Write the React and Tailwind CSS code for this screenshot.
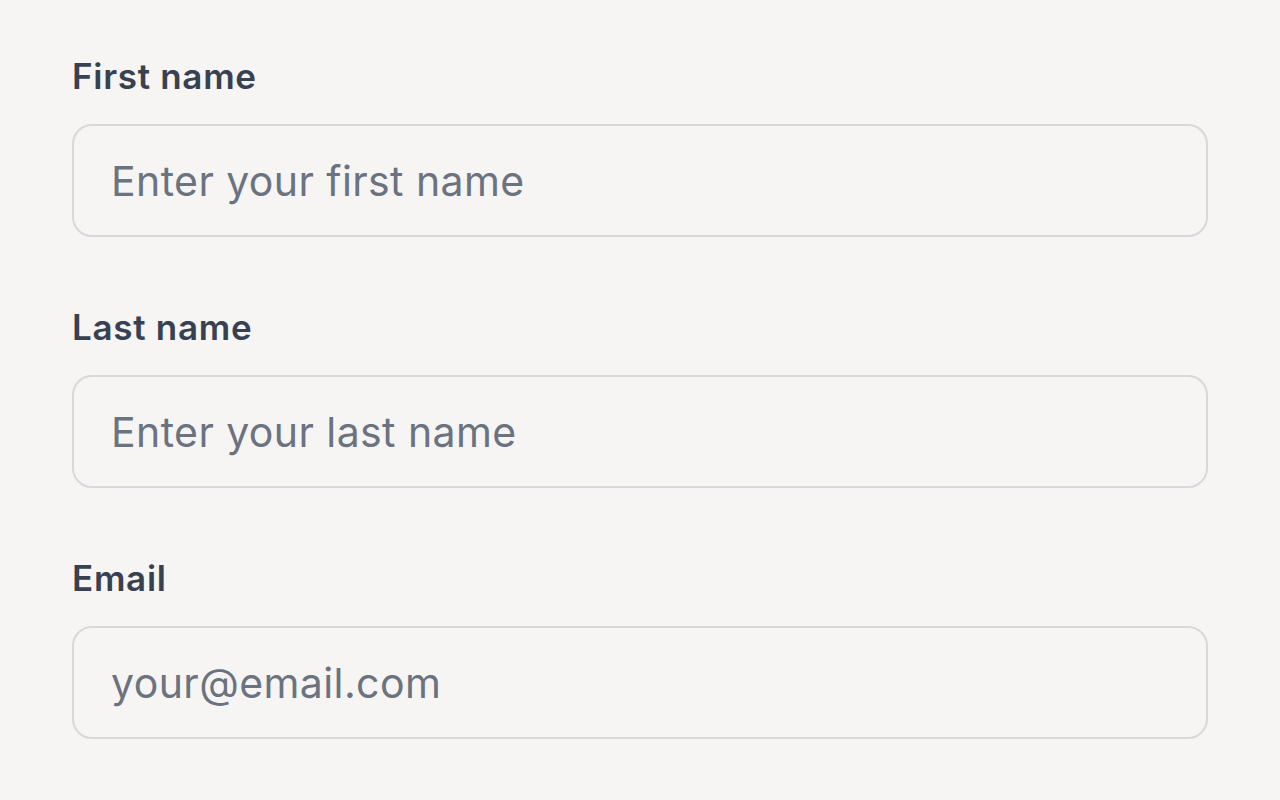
import React from 'react';

const fields = [
    { id: 'first', label: 'First name', type: 'text', placeholder: 'Enter your first name' },
    { id: 'last', label: 'Last name', type: 'text', placeholder: 'Enter your last name' },
    { id: 'email', label: 'Email', type: 'email', placeholder: 'your@email.com' },
];

export default function App() {
    return (
        <div
            className="min-h-screen bg-[#f6f5f3] px-[72px] pt-[51px]"
            style={{ fontFamily: 'Inter, "Noto Sans", sans-serif' }}
        >
            <form className="flex flex-col gap-[65px]">
                {fields.map((f) => (
                    <div key={f.id} className="flex flex-col gap-[23px]">
                        <label
                            htmlFor={f.id}
                            className="block text-[35px] leading-[50px] font-semibold tracking-[0.02em] text-[#374151]"
                        >
                            {f.label}
                        </label>
                        <input
                            id={f.id}
                            type={f.type}
                            placeholder={f.placeholder}
                            className="w-full h-[113px] px-[37px] bg-transparent border-2 border-[#d8d8da] rounded-[20px] text-[41px] tracking-[0.01em] text-[#111827] placeholder:text-[#6b7280] outline-none"
                        />
                    </div>
                ))}
            </form>
        </div>
    );
}
